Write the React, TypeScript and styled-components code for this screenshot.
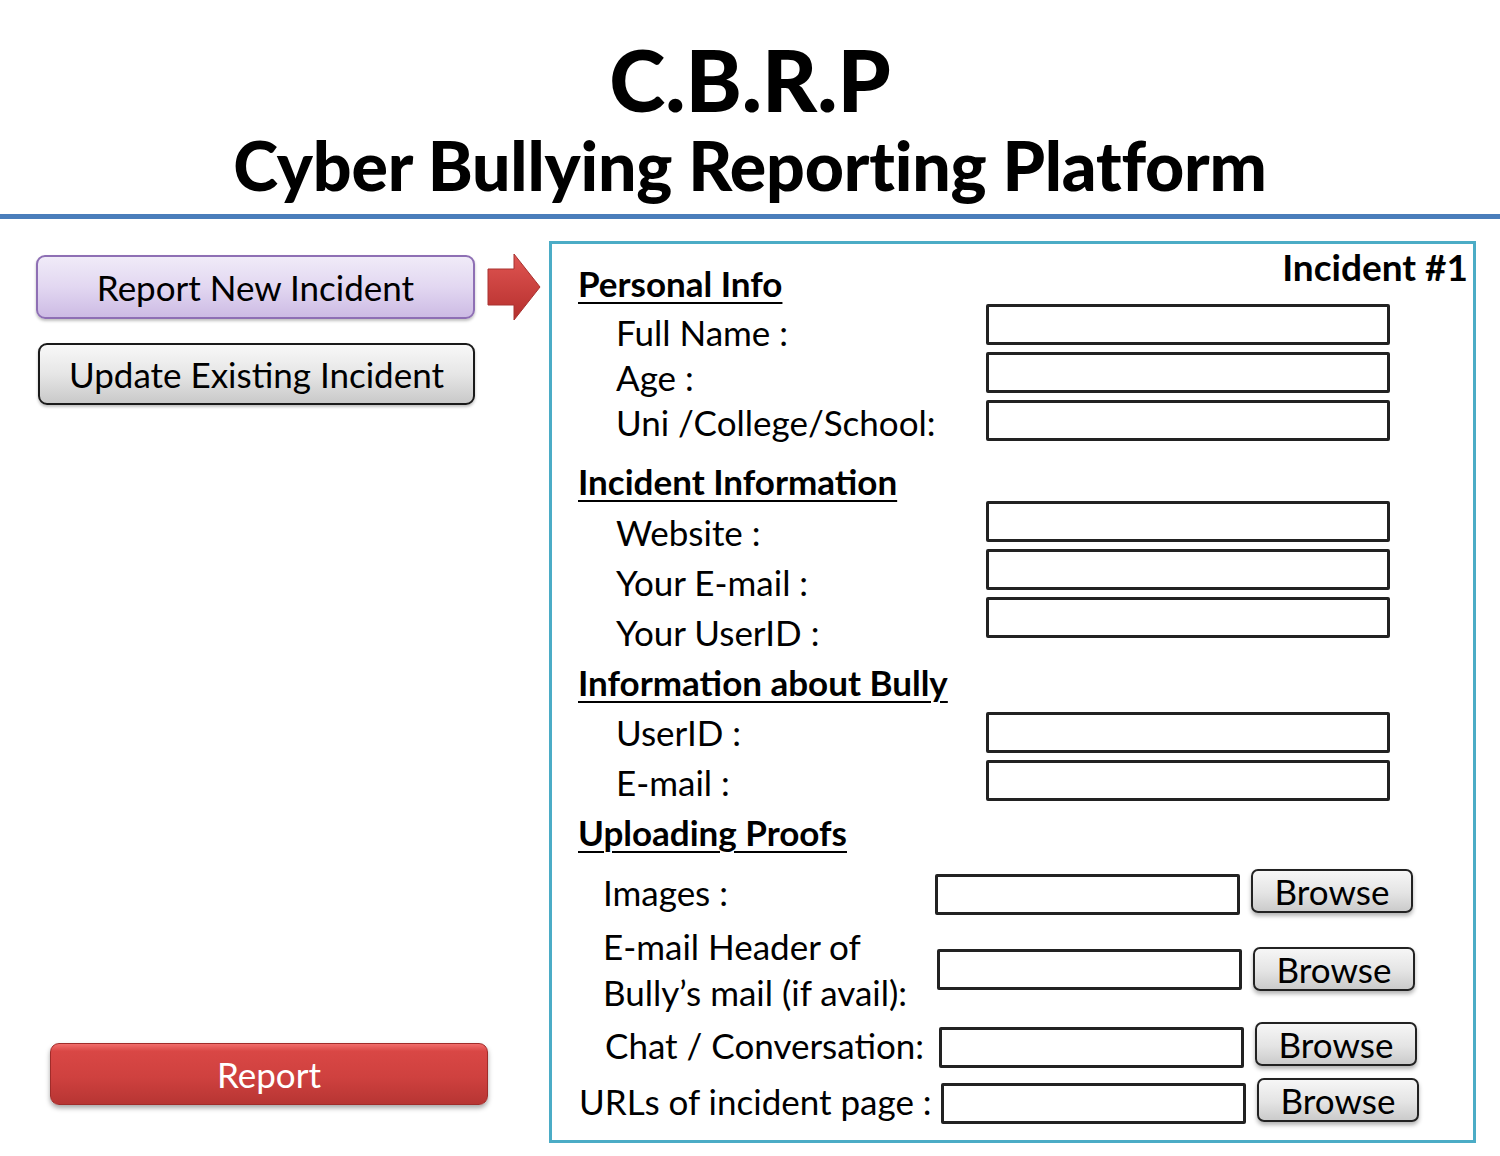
import React from "react";
import styled, { createGlobalStyle } from "styled-components";

const GlobalStyle = createGlobalStyle`
  html, body { margin: 0; padding: 0; background: #ffffff; }
  body { font-family: Lato, "Open Sans", "Liberation Sans", sans-serif; color: #000; }
  * { box-sizing: border-box; }
`;

const Page = styled.div`
  width: 1500px;
  height: 1156px;
  display: flex;
  flex-direction: column;
  background: #fff;
`;

const Header = styled.header`
  display: flex;
  flex-direction: column;
  align-items: center;
  padding-top: 32px;
  height: 219px;
  border-bottom: 5px solid #4a7ebb;
`;

const Title = styled.h1`
  margin: 0;
  font-family: Lato, sans-serif;
  font-weight: 900;
  font-size: 85px;
  line-height: 94px;
`;

const Subtitle = styled.h2`
  margin: 0;
  font-family: Lato, sans-serif;
  font-weight: 900;
  font-size: 68px;
  line-height: 78px;
  letter-spacing: -0.2px;
`;

const Main = styled.main`
  display: flex;
  padding-top: 22px;
`;

const Sidebar = styled.aside`
  width: 549px;
  display: flex;
  flex-direction: column;
  padding: 12px 0 38px 36px;
`;

const ButtonRow = styled.div<{ $mt?: number }>`
  display: flex;
  align-items: center;
  gap: 12px;
  margin-top: ${(p) => p.$mt ?? 0}px;
`;

const NavButton = styled.button<{ $variant: "purple" | "grey"; $ml?: number }>`
  width: ${(p) => (p.$variant === "purple" ? 439 : 437)}px;
  height: ${(p) => (p.$variant === "purple" ? 64 : 62)}px;
  margin-left: ${(p) => p.$ml ?? 0}px;
  border-radius: 9px;
  font-family: Lato, sans-serif;
  font-size: 35px;
  color: #000;
  padding: 0;
  border: 2px solid ${(p) => (p.$variant === "purple" ? "#8e6fb4" : "#1a1a1a")};
  background: ${(p) =>
    p.$variant === "purple"
      ? "linear-gradient(180deg, #f0ebf8 0%, #e2d7f1 50%, #cdbbe4 100%)"
      : "linear-gradient(180deg, #f8f8f8 0%, #e6e6e6 50%, #c9c9c9 100%)"};
  box-shadow: 0 2px 3px rgba(0, 0, 0, 0.25);
`;

const ReportButton = styled.button`
  margin-top: auto;
  margin-left: 14px;
  width: 438px;
  height: 62px;
  border-radius: 9px;
  border: 1px solid #a02c2a;
  background: linear-gradient(180deg, #f16c6a 0%, #d94745 12%, #cf413f 55%, #b73533 100%);
  color: #fff;
  font-family: Lato, sans-serif;
  font-size: 35px;
  box-shadow: 0 3px 5px rgba(0, 0, 0, 0.35);
`;

const Panel = styled.section`
  width: 927px;
  height: 902px;
  border: 3px solid #4bacc6;
  padding: 3px 5px 0 26px;
  display: flex;
  flex-direction: column;
`;

const PanelTop = styled.div`
  display: flex;
  justify-content: space-between;
  align-items: flex-start;
`;

const Heading = styled.h3<{ $mt?: number }>`
  margin: ${(p) => p.$mt ?? 0}px 0 0 0;
  font-family: Lato, sans-serif;
  font-weight: 700;
  font-size: 35px;
  line-height: 40px;
  text-decoration: underline;
  text-decoration-thickness: 2px;
  text-underline-offset: 5px;
`;

const IncidentTag = styled.div`
  font-family: Lato, sans-serif;
  font-weight: 700;
  font-size: 37px;
  line-height: 40px;
`;

const FieldGroup = styled.div<{ $mt: number }>`
  display: grid;
  grid-template-columns: 370px 404px;
  margin-top: ${(p) => p.$mt}px;
  padding-left: 38px;
`;

const LabelStack = styled.div<{ $lh: number; $pt: number }>`
  display: flex;
  flex-direction: column;
  padding-top: ${(p) => p.$pt}px;
  font-family: Lato, sans-serif;
  font-size: 35px;
  line-height: ${(p) => p.$lh}px;
  white-space: nowrap;
`;

const InputStack = styled.div<{ $pt?: number }>`
  display: flex;
  flex-direction: column;
  gap: 7px;
  padding-top: ${(p) => p.$pt ?? 0}px;
`;

const TextBox = styled.div<{ $w?: number }>`
  width: ${(p) => p.$w ?? 404}px;
  height: 41px;
  border: 3px solid #222;
  border-radius: 2px;
  background: #fff;
`;

const UploadRow = styled.div<{ $mt: number; $h: number; $nudge: number }>`
  display: grid;
  grid-template-columns: ${(p) => 346 + p.$nudge}px 305px 162px;
  column-gap: 11px;
  align-items: center;
  height: ${(p) => p.$h}px;
  margin-top: ${(p) => p.$mt}px;
`;

const UploadLabel = styled.div<{ $pl: number }>`
  padding-left: ${(p) => p.$pl}px;
  font-family: Lato, sans-serif;
  font-size: 35px;
  line-height: 46px;
  white-space: nowrap;
`;

const BrowseButton = styled.button<{ $center?: boolean }>`
  width: 162px;
  height: 44px;
  align-self: ${(p) => (p.$center ? "center" : "start")};
  border: 2px solid #222;
  border-radius: 7px;
  background: linear-gradient(180deg, #f6f6f6 0%, #e4e4e4 55%, #cbcbcb 100%);
  box-shadow: 0 3px 4px rgba(0, 0, 0, 0.3);
  font-family: Lato, sans-serif;
  font-size: 35px;
  line-height: 38px;
  color: #000;
  padding: 0;
`;

const UploadBox = styled(TextBox)`
  align-self: end;
`;

const Arrow = () => (
  <svg width="54" height="68" viewBox="0 0 54 68">
    <defs>
      <linearGradient id="arrowGrad" x1="0" y1="0" x2="0" y2="1">
        <stop offset="0" stopColor="#e05552" />
        <stop offset="1" stopColor="#b52f2d" />
      </linearGradient>
    </defs>
    <path d="M1 16 H27 V1 L53 34 L27 67 V52 H1 Z" fill="url(#arrowGrad)" stroke="#a83230" strokeWidth="1" />
  </svg>
);

const personal = ["Full Name :", "Age :", "Uni /College/School:"];
const incident = ["Website :", "Your E-mail :", "Your UserID :"];
const bully = ["UserID :", "E-mail :"];

export default function App() {
  return (
    <>
      <GlobalStyle />
      <Page>
        <Header>
          <Title>C.B.R.P</Title>
          <Subtitle>Cyber Bullying Reporting Platform</Subtitle>
        </Header>
        <Main>
          <Sidebar>
            <ButtonRow>
              <NavButton $variant="purple">Report New Incident</NavButton>
              <Arrow />
            </ButtonRow>
            <ButtonRow $mt={22}>
              <NavButton $variant="grey" $ml={2}>
                Update Existing Incident
              </NavButton>
            </ButtonRow>
            <ReportButton>Report</ReportButton>
          </Sidebar>
          <Panel>
            <PanelTop>
              <Heading $mt={16}>Personal Info</Heading>
              <IncidentTag>Incident #1</IncidentTag>
            </PanelTop>
            <FieldGroup $mt={1}>
              <LabelStack $lh={45} $pt={6}>
                {personal.map((l) => (
                  <span key={l}>{l}</span>
                ))}
              </LabelStack>
              <InputStack>
                {personal.map((l) => (
                  <TextBox key={l} />
                ))}
              </InputStack>
            </FieldGroup>
            <Heading $mt={16}>Incident Information</Heading>
            <FieldGroup $mt={0}>
              <LabelStack $lh={50} $pt={6}>
                {incident.map((l) => (
                  <span key={l}>{l}</span>
                ))}
              </LabelStack>
              <InputStack>
                {incident.map((l) => (
                  <TextBox key={l} />
                ))}
              </InputStack>
            </FieldGroup>
            <Heading $mt={5}>Information about Bully</Heading>
            <FieldGroup $mt={5}>
              <LabelStack $lh={50} $pt={0}>
                {bully.map((l) => (
                  <span key={l}>{l}</span>
                ))}
              </LabelStack>
              <InputStack $pt={5}>
                {bully.map((l) => (
                  <TextBox key={l} />
                ))}
              </InputStack>
            </FieldGroup>
            <Heading $mt={5}>Uploading Proofs</Heading>
            <UploadRow $mt={17} $h={45} $nudge={0}>
              <UploadLabel $pl={25}>Images :</UploadLabel>
              <UploadBox $w={305} />
              <BrowseButton>Browse</BrowseButton>
            </UploadRow>
            <UploadRow $mt={9} $h={92} $nudge={2}>
              <UploadLabel $pl={25}>
                E-mail Header of
                <br />
                Bully’s mail (if avail):
              </UploadLabel>
              <TextBox $w={305} />
              <BrowseButton $center>Browse</BrowseButton>
            </UploadRow>
            <UploadRow $mt={7} $h={44} $nudge={4}>
              <UploadLabel $pl={27}>Chat / Conversation:</UploadLabel>
              <UploadBox $w={305} />
              <BrowseButton>Browse</BrowseButton>
            </UploadRow>
            <UploadRow $mt={12} $h={44} $nudge={6}>
              <UploadLabel $pl={1}>URLs of incident page :</UploadLabel>
              <UploadBox $w={305} />
              <BrowseButton>Browse</BrowseButton>
            </UploadRow>
          </Panel>
        </Main>
      </Page>
    </>
  );
}
